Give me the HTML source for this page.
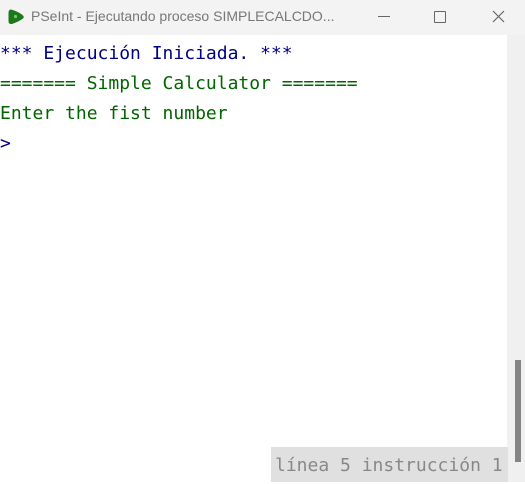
<!DOCTYPE html>
<html><head><meta charset="utf-8"><style>
html,body{margin:0;padding:0;width:525px;height:482px;overflow:hidden;background:#fff;}
.title{position:absolute;left:0;top:0;width:525px;height:35px;background:#f3f3f3;}
.title .t{position:absolute;left:31px;top:8px;font:14px "Liberation Sans",sans-serif;color:#777;}
.con{position:absolute;left:0;top:39px;font:18px "DejaVu Sans Mono","Liberation Mono",monospace;line-height:30px;white-space:pre;}
.b{color:#000080}.g{color:#006400}
.sb{position:absolute;left:507px;top:35px;width:18px;height:447px;background:#f0f0f0;}
.th{position:absolute;left:515px;top:360px;width:6px;height:102px;background:#858585;}
.st{position:absolute;left:271px;top:447px;width:237px;height:35px;background:#e0e0e0;font:18px "DejaVu Sans Mono","Liberation Mono",monospace;color:#888;line-height:37px;padding-left:4px;box-sizing:border-box;white-space:pre;}
</style></head><body>
<div class="title">
<svg style="position:absolute;left:7px;top:8px" width="18" height="18" viewBox="0 0 18 18"><path d="M4 1.5 Q1.5 1.5 1.5 5 L1.5 13 Q1.5 16.5 5 16 Q12 13.5 16 10.5 Q17.5 9 16 7.5 Q12 4 5 1.8Z" fill="#1a7a1a"/><circle cx="8.5" cy="8.5" r="1.6" fill="#8b8"/></svg>
<div class="t">PSeInt - Ejecutando proceso SIMPLECALCDO...</div>
<div style="position:absolute;left:378px;top:16px;width:12px;height:1.2px;background:#666"></div>
<div style="position:absolute;left:434px;top:11px;width:10px;height:10px;border:1.3px solid #666;border-radius:1px"></div>
<svg style="position:absolute;left:492px;top:10px" width="13" height="13"><path d="M1 1L12 12M12 1L1 12" stroke="#666" stroke-width="1.2"/></svg>
</div>
<div class="con"><span class="b">*** Ejecución Iniciada. ***</span>
<span class="g">======= Simple Calculator =======</span>
<span class="g">Enter the fist number</span>
<span class="b">&gt;</span></div>
<div class="sb"></div><div class="th"></div>
<div class="st">línea 5 instrucción 1</div>
</body></html>
